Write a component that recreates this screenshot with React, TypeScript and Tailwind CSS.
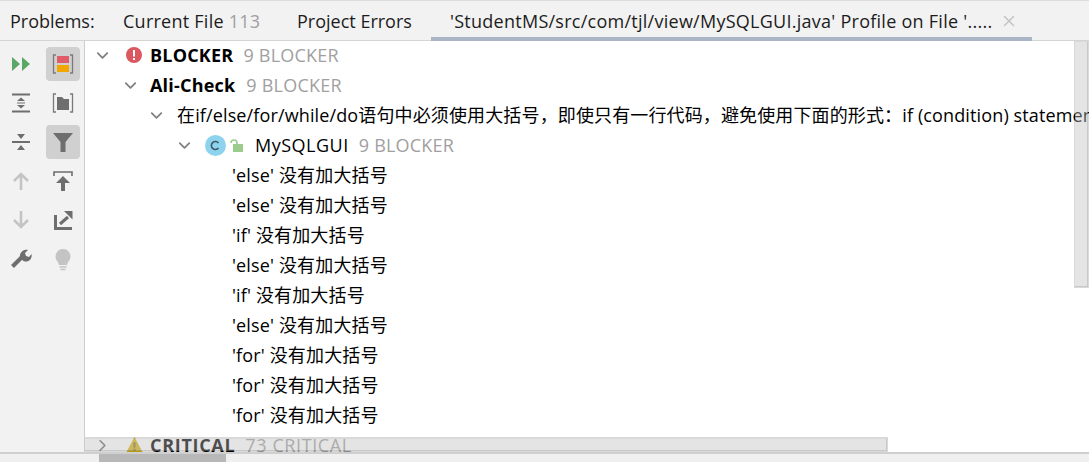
import { ChevronDown, ChevronRight, X } from "lucide-react";

const FONT = "font-['Open_Sans','Noto_Sans_CJK_SC',sans-serif]";

function Tree({ open = true }: { open?: boolean }) {
  return open ? (
    <ChevronDown className="w-[19px] h-[19px] text-[#7f7f7f] shrink-0 -mr-px" strokeWidth={2.2} />
  ) : (
    <ChevronRight className="w-[19px] h-[19px] text-[#6e6e6e] shrink-0 -mr-px" strokeWidth={2.2} />
  );
}

function Tool({ active, children }: { active?: boolean; children: React.ReactNode }) {
  return (
    <div className={`w-[34px] h-[34px] rounded-[4px] flex items-center justify-center ${active ? "bg-[#d0d0d0]" : ""}`}>
      <svg width="24" height="24" viewBox="0 0 24 24">
        {children}
      </svg>
    </div>
  );
}

function ProblemRow({ keyword }: { keyword: string }) {
  return (
    <div className="h-[30px] flex items-center pl-[147px] text-[18px] text-black whitespace-nowrap tracking-[0.15px]">
      {`'${keyword}' 没有加大括号`}
    </div>
  );
}

const problems = ["else", "else", "if", "else", "if", "else", "for", "for", "for"];

export default function App() {
  return (
    <div className={`w-[1089px] h-[462px] overflow-hidden flex flex-col bg-white ${FONT}`}>
      {/* tab bar */}
      <div className="h-[41px] shrink-0 bg-[#f2f2f2] border-t border-t-[#dcdcdc] border-b border-b-[#d4d4d4] flex items-center pt-px text-[18px] text-[#1c1c1c] whitespace-nowrap relative">
        <span className="ml-[10px] w-[113px]">Problems:</span>
        <span className="w-[174px] tracking-[0.25px]">
          Current File <span className="text-[#a0a0a0]">113</span>
        </span>
        <span className="w-[153px]">Project Errors</span>
        <span className="tracking-[0.26px]">'StudentMS/src/com/tjl/view/MySQLGUI.java' Profile on File '.....</span>
        <X className="w-[18px] h-[18px] text-[#c4c4c4] ml-[8px]" strokeWidth={2} />
        <div className="absolute left-[431px] w-[601px] -bottom-px h-[4px] bg-[#a9b4c5]" />
      </div>

      <div className="flex-1 flex min-h-0">
        {/* toolbar */}
        <div className="w-[85px] shrink-0 bg-[#f2f2f2] border-r border-r-[#cdcdcd] grid grid-cols-[34px_34px] auto-rows-[39px] gap-x-[8px] pl-[4px] pt-[3px] justify-start justify-items-center items-center">
          <Tool>
            <path d="M3 5l8 7-8 7zM13 5l8 7-8 7z" fill="#59a869" />
          </Tool>
          <Tool active>
            <path d="M5 3H2.500v18H5M19 3h2.500v18H19" fill="none" stroke="#7a7a7a" strokeWidth="1.3" />
            <rect x="6" y="4" width="12" height="7" fill="#e05c67" />
            <rect x="6" y="13" width="12" height="7" fill="#f2a700" />
          </Tool>
          <Tool>
            <path d="M3 3.500h18M3 20.500h18" stroke="#6e6e6e" strokeWidth="2" />
            <path d="M12 6.500l4 3.500H8zM12 17.500l4-3.500H8z" fill="#6e6e6e" />
            <path d="M8 12h8" stroke="#6e6e6e" strokeWidth="1" />
          </Tool>
          <Tool>
            <path d="M5 3H2.500v18H5M19 3h2.500v18H19" fill="none" stroke="#7a7a7a" strokeWidth="1.3" />
            <path d="M6 6h5l2 2h5v11H6z" fill="#6e6e6e" />
          </Tool>
          <Tool>
            <path d="M3 12h18" stroke="#6e6e6e" strokeWidth="2" />
            <path d="M8 4h8l-4 5zM8 20h8l-4-5z" fill="#6e6e6e" />
          </Tool>
          <Tool active>
            <path d="M2 3h20l-7.500 9v10h-5V12z" fill="#6e6e6e" />
          </Tool>
          <Tool>
            <path d="M12 21V5M5 12l7-7 7 7" fill="none" stroke="#c4c4c4" strokeWidth="2.6" />
          </Tool>
          <Tool>
            <path d="M3 7V3h18v4" fill="none" stroke="#6e6e6e" strokeWidth="1.6" />
            <path d="M12 7l7 7h-5v8h-4v-8H5z" fill="#6e6e6e" />
          </Tool>
          <Tool>
            <path d="M12 3v16M5 12l7 7 7-7" fill="none" stroke="#c4c4c4" strokeWidth="2.6" />
          </Tool>
          <Tool>
            <path d="M4.500 7v13.500H21" fill="none" stroke="#6e6e6e" strokeWidth="3" />
            <path d="M9 16l8-7" stroke="#6e6e6e" strokeWidth="3" />
            <path d="M13 3h8.500v8.500z" fill="#6e6e6e" />
          </Tool>
          <Tool>
            <path d="M3.500 19.500L13 10" stroke="#6e6e6e" strokeWidth="4" />
            <path d="M11 11c-1-5 3-9 8-8l-3 3 1 3 3 1 2.500-3c1 5-3 9-8 7z" fill="#6e6e6e" />
          </Tool>
          <Tool>
            <path d="M12 2a7.500 7.500 0 0 0-5 13l1 3h8l1-3a7.500 7.500 0 0 0-5-13z" fill="#c4c4c4" />
            <path d="M8.500 20h7M9.500 22.500h5" stroke="#c4c4c4" strokeWidth="1.5" />
          </Tool>
        </div>

        {/* results tree */}
        <div className="flex-1 min-w-0 relative overflow-hidden text-[18px] text-black whitespace-nowrap">
          <div className="-mt-px">
            <div className="h-[30px] flex items-center pl-[8px]">
              <Tree />
              <svg width="16" height="16" viewBox="0 0 16 16" className="ml-[15px] mr-[8px] shrink-0">
                <circle cx="8" cy="8" r="8" fill="#db5860" />
                <rect x="7" y="3" width="2" height="6.500" fill="#fff" />
                <rect x="7" y="11" width="2" height="2" fill="#fff" />
              </svg>
              <b className="font-bold tracking-[0.2px]">BLOCKER</b>
              <span className="ml-[10px] text-[#a0a0a0] tracking-[0.22px]">9 BLOCKER</span>
            </div>
            <div className="h-[30px] flex items-center pl-[36px]">
              <Tree />
              <b className="font-bold ml-[11px] tracking-[0.2px]">Ali-Check</b>
              <span className="ml-[11px] text-[#a0a0a0] tracking-[0.22px]">9 BLOCKER</span>
            </div>
            <div className="h-[30px] flex items-center pl-[62px]">
              <Tree />
              <span className="ml-[12px] tracking-[0.13px]">在if/else/for/while/do语句中必须使用大括号，即使只有一行代码，避免使用下面的形式：if (condition) statements;</span>
            </div>
            <div className="h-[30px] flex items-center pl-[90px]">
              <Tree />
              <svg width="21" height="21" viewBox="0 0 21 21" className="ml-[12px] shrink-0">
                <circle cx="10.500" cy="10.500" r="10.500" fill="#8ed3ee" />
                <path d="M13.500 8a4 4 0 1 0 0 5" fill="none" stroke="#3d5a66" strokeWidth="1.6" />
              </svg>
              <svg width="14" height="14" viewBox="0 0 14 14" className="ml-[4px] mr-[11px] shrink-0">
                <rect x="3" y="6" width="10" height="8" fill="#9ccc8c" />
                <path d="M1 5a3 3 0 0 1 6 0v2" fill="none" stroke="#9ccc8c" strokeWidth="1.6" />
              </svg>
              <span className="tracking-[0.5px]">MySQLGUI</span>
              <span className="ml-[10px] text-[#a0a0a0] tracking-[0.22px]">9 BLOCKER</span>
            </div>
            {problems.map((keyword, i) => (
              <ProblemRow key={i} keyword={keyword} />
            ))}
            <div className="h-[30px] flex items-center pl-[8px]">
              <Tree open={false} />
              <svg width="17" height="16" viewBox="0 0 16 15" className="ml-[15px] mr-[7px] shrink-0">
                <path d="M8 0l8 15H0z" fill="#d6b31c" />
                <rect x="7" y="5" width="2" height="5" fill="#8a7a2a" />
                <rect x="7" y="11" width="2" height="2" fill="#8a7a2a" />
              </svg>
              <b className="font-bold tracking-[0.7px]">CRITICAL</b>
              <span className="ml-[10px] text-[#a0a0a0] tracking-[0.6px]">73 CRITICAL</span>
            </div>
          </div>
          {/* scrollbars sit over the tree, see-through */}
          <div className="absolute left-0 top-[396px] w-[803px] h-[15px] bg-black/[0.15] pt-[2px] pr-px pb-px">
            <div className="h-full bg-white/[0.3] border-b border-r border-black/[0.12]" />
          </div>
          <div className="absolute right-0 top-0 w-[15px] h-[247px] bg-black/[0.15] p-px">
            <div className="h-full bg-white/[0.3] border-b border-r border-black/[0.12]" />
          </div>
        </div>
      </div>

      {/* bottom tool window strip */}
      <div className="h-[10px] shrink-0 bg-[#f0f0f0] border-t-2 border-t-[#cfcfcf] pl-[99px]">
        <div className="w-[127px] h-full bg-[#b8b8b8]" />
      </div>
    </div>
  );
}
